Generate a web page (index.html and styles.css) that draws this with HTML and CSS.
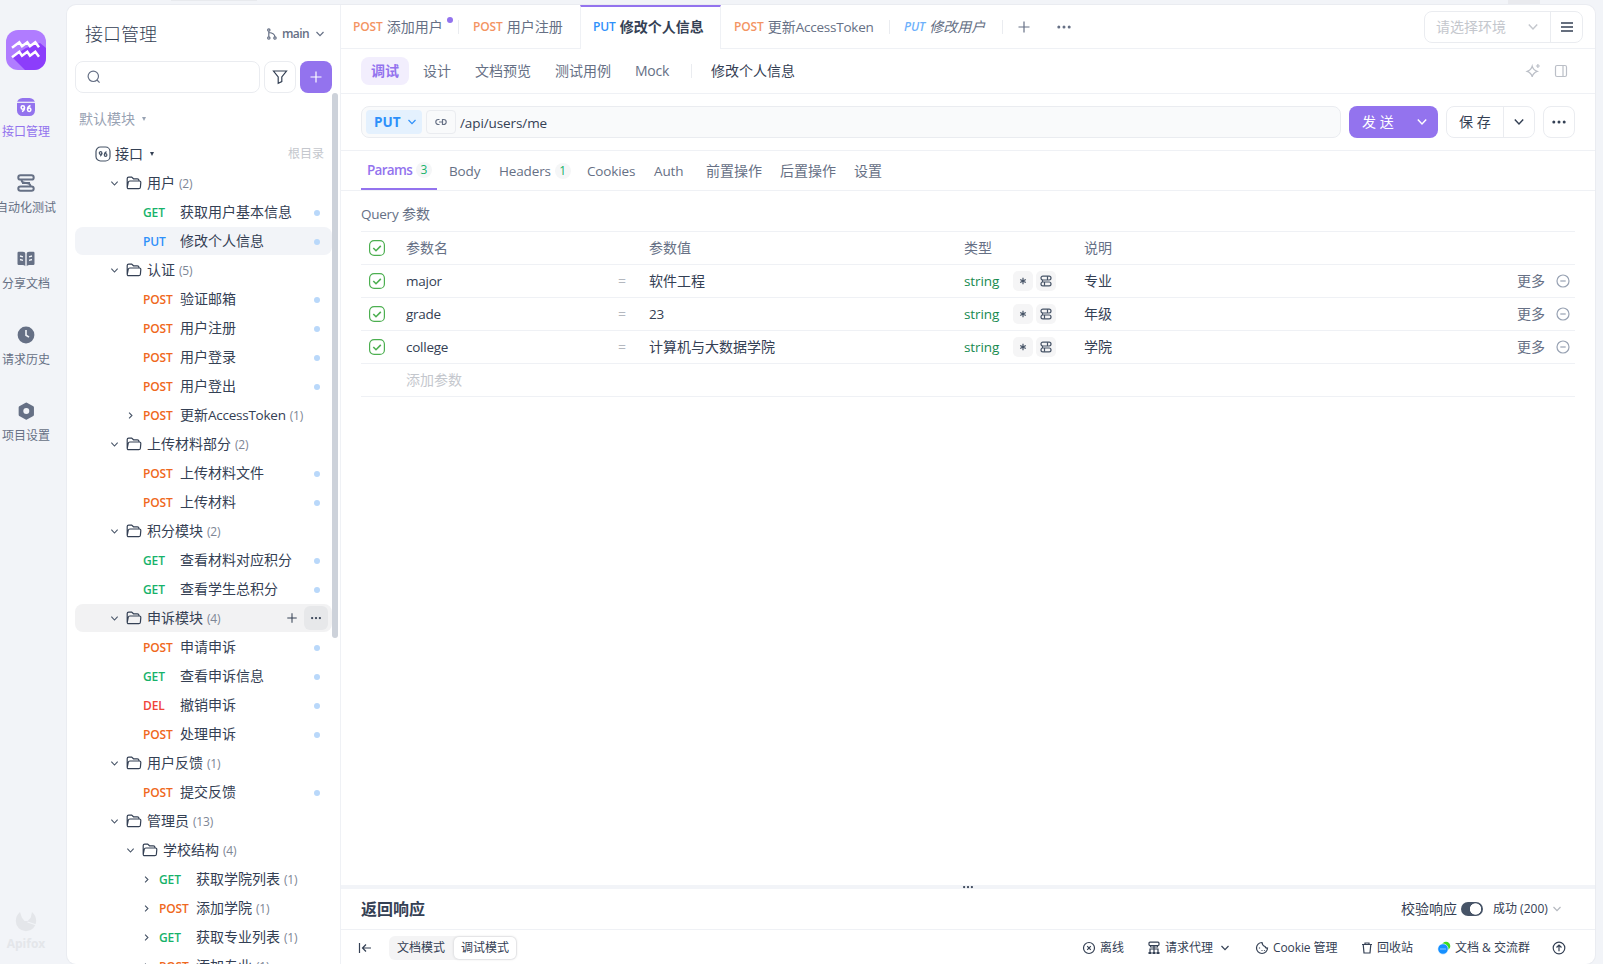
FILE: index.html
```html
<!DOCTYPE html>
<html lang="zh-CN">
<head>
  <meta charset="UTF-8">
  <title>接口管理</title>
  <link rel="stylesheet" href="styles.css">
</head>
<body>

  <!-- ICONS -->
  <svg class="sprite" width="0" height="0">
    <symbol id="down" viewBox="0 0 10 10"><path d="M1.500 3l3.500 3.700L8.500 3"/></symbol>
    <symbol id="right" viewBox="0 0 10 10"><path d="M3.400 1.800l3.200 3.200-3.200 3.200"/></symbol>
    <symbol id="folder" viewBox="0 0 16 16"><path d="M1.200 12.500V3.600q0-1.500 1.500-1.500h3l1.800 1.700h3.800q1.500 0 1.800 1.700M3.900 6h9.300q1.700 0 1.600 1.600l-.4 4.600q-.1 1.500-1.700 1.500H2.700q-1.600 0-1.400-1.600l.9-4.600Q2.500 6 3.900 6z"/></symbol>
    <symbol id="check" viewBox="0 0 16 16"><rect x=".6" y=".6" width="14.800" height="14.800" rx="4.500"/><path d="M4.300 8l2.700 2.700 4.800-4.800" stroke-width="1.600"/></symbol>
    <symbol id="minus" viewBox="0 0 14 14"><circle cx="7" cy="7" r="6"/><path d="M4.300 7h5.400"/></symbol>
    <symbol id="dots" viewBox="0 0 16 16"><g fill="currentColor" stroke="none"><circle cx="2.800" cy="8" r="1.500"/><circle cx="8" cy="8" r="1.500"/><circle cx="13.200" cy="8" r="1.500"/></g></symbol>
    <symbol id="plus" viewBox="0 0 14 14"><path d="M7 1.500v11M1.500 7h11"/></symbol>
    <symbol id="star" viewBox="0 0 8 8"><path d="M4 .8v6.400M1.200 2.400l5.600 3.200M6.800 2.400L1.200 5.600"/></symbol>
    <symbol id="schema" viewBox="0 0 12 12"><rect x="1" y="1.200" width="10" height="3.800" rx="1.900"/><rect x="1" y="7" width="10" height="3.800" rx="1.900"/><path d="M7.500 1.200v3.800M4.500 7v3.800M2.500 5v2"/></symbol>
  </svg>

  <div class="topbar"><i class="top-left"></i><i class="top-right"></i></div>

  <div class="shell">

    <!-- LEFT RAIL -->
    <nav class="rail">
      <svg class="logo" width="40" height="40" viewBox="0 0 40 40">
        <defs><clipPath id="round"><rect width="40" height="40" rx="12"/></clipPath></defs>
        <g clip-path="url(#round)">
          <rect width="40" height="40" fill="#b07cff"/>
          <path d="M6 27l13 13h21V18l-6-5-14 5z" fill="#8c3dfb"/>
        </g>
        <path d="M6 17.800l7.300-5.600 2.700 4 5.300-4 2.700 4 5.300-4 3.700 5M6 27.300l7.300-5.600 2.700 4 5.300-4 2.700 4 5.300-4 3.700 5" fill="none" stroke="#fff" stroke-width="2.500"/>
      </svg>
      <a class="rail-item active">
        <svg width="20" height="20" viewBox="0 0 20 20"><rect x="1" y="1" width="18" height="18" rx="5.500" fill="#9373ee"/><path d="M1 5.300h18" stroke="#f2f4f8" stroke-width="1.200"/><g fill="none" stroke="#fff" stroke-width="1.500"><circle cx="6.800" cy="10.500" r="1.700"/><path d="M8.500 10.500q0 3-2.500 4M14.500 8.500Q11.500 9.500 11.500 12.600"/><circle cx="13.200" cy="12.800" r="1.700"/></g></svg>
        <span>接口管理</span>
      </a>
      <a class="rail-item wide">
        <svg width="20" height="20" viewBox="0 0 20 20" fill="none" stroke="#667085" stroke-width="2"><rect x="2.300" y="2.200" width="15.400" height="4.400" rx="2.200"/><rect x="2.300" y="13.400" width="15.400" height="4.400" rx="2.200"/><path d="M5.500 7q.5 3 4.500 3t4.500 3M6 10h8"/></svg>
        <span>自动化测试</span>
      </a>
      <a class="rail-item">
        <svg width="20" height="20" viewBox="0 0 20 20"><path d="M1.500 4q0-1.200 1.200-1.200H7q2.300 0 2.300 1.700v12.700Q8.500 16 6.500 16H2.700q-1.200 0-1.200-1.200zM18.500 4q0-1.200-1.200-1.200H13q-2.300 0-2.300 1.700v12.700q.8-1.200 2.800-1.200h3.800q1.200 0 1.200-1.200z" fill="#667085"/><path d="M4 7l3 .8M4 10.500l3 .8M16 7l-3 .8M16 10.500l-3 .8" stroke="#f2f4f8" stroke-width="1.300"/></svg>
        <span>分享文档</span>
      </a>
      <a class="rail-item">
        <svg width="20" height="20" viewBox="0 0 20 20"><circle cx="10" cy="10" r="8.400" fill="#667085"/><path d="M10 5v5.200l3 2" fill="none" stroke="#f2f4f8" stroke-width="1.600"/></svg>
        <span>请求历史</span>
      </a>
      <a class="rail-item">
        <svg width="20" height="20" viewBox="0 0 20 20"><path d="M10.300 2.800l6.400 3.600v7.400l-6.400 3.600-6.400-3.600V6.400z" fill="#667085" stroke="#667085" stroke-width="2.500" stroke-linejoin="round"/><circle cx="10.300" cy="10" r="3" fill="#f2f4f8"/></svg>
        <span>项目设置</span>
      </a>
      <div class="brand">
        <svg width="22" height="22" viewBox="0 0 22 22"><path d="M5 2l1.800 5.500L9.500 11h3.200l3-3.300L17 2q4.200 3.500 4.200 9A10.200 10.200 0 01.800 11Q.8 5.500 5 2z" fill="#e4e6ea"/><path d="M12.500 12l9 3" stroke="#f2f4f8"/></svg>
        <b>Apifox</b>
      </div>
    </nav>

    <div class="panel">

      <!-- API TREE -->
      <aside class="sidebar">
        <div class="side-head">
          <h1>接口管理</h1>
          <div class="branch">
            <svg width="10" height="12" viewBox="0 0 10 12"><circle cx="1.800" cy="2" r="1.200"/><circle cx="1.800" cy="10" r="1.200"/><circle cx="8" cy="10" r="1.200"/><path d="M1.800 3.200v5.600M2 4.500q5.500.500 6 4.300"/></svg>
            <b>main</b>
            <svg width="10" height="10"><use href="#down"/></svg>
          </div>
        </div>
        <div class="side-tools">
          <div class="search"><svg width="14" height="14" viewBox="0 0 14 14"><circle cx="6.300" cy="6.300" r="5.200"/><path d="M10 10l2.600 2.600"/></svg></div>
          <button class="tool"><svg width="16" height="16" viewBox="0 0 16 16"><path d="M1.500 2h13l-4.700 6v4.500l-3.600 1.700V8z"/></svg></button>
          <button class="tool primary"><svg width="14" height="14"><use href="#plus"/></svg></button>
        </div>
        <div class="module">默认模块<i class="caret"></i></div>
        <div class="scrollbar"></div>

        <div class="tree">
          <div class="root">
            <svg width="16" height="16" viewBox="0 0 16 16"><rect x="1" y="1" width="14" height="14" rx="4.500"/><circle cx="5.600" cy="7" r="1.300"/><path d="M6.900 7q0 2.200-1.700 3.200M11.500 5.600Q9.400 6.600 9.300 8.700"/><circle cx="10.600" cy="9" r="1.300"/></svg>
            <span>接口</span><i class="caret"></i>
            <em>根目录</em>
          </div>

          <div class="row folder"><svg class="arrow"><use href="#down"/></svg><svg class="dir"><use href="#folder"/></svg>用户<small>(2)</small></div>
          <div class="row api"><b class="get">GET</b>获取用户基本信息<i class="dot"></i></div>
          <div class="row api selected"><b class="put">PUT</b>修改个人信息<i class="dot"></i></div>

          <div class="row folder"><svg class="arrow"><use href="#down"/></svg><svg class="dir"><use href="#folder"/></svg>认证<small>(5)</small></div>
          <div class="row api"><b class="post">POST</b>验证邮箱<i class="dot"></i></div>
          <div class="row api"><b class="post">POST</b>用户注册<i class="dot"></i></div>
          <div class="row api"><b class="post">POST</b>用户登录<i class="dot"></i></div>
          <div class="row api"><b class="post">POST</b>用户登出<i class="dot"></i></div>
          <div class="row api open"><svg class="arrow"><use href="#right"/></svg><b class="post">POST</b>更新<span class="en">AccessToken</span><small>(1)</small></div>

          <div class="row folder"><svg class="arrow"><use href="#down"/></svg><svg class="dir"><use href="#folder"/></svg>上传材料部分<small>(2)</small></div>
          <div class="row api"><b class="post">POST</b>上传材料文件<i class="dot"></i></div>
          <div class="row api"><b class="post">POST</b>上传材料<i class="dot"></i></div>

          <div class="row folder"><svg class="arrow"><use href="#down"/></svg><svg class="dir"><use href="#folder"/></svg>积分模块<small>(2)</small></div>
          <div class="row api"><b class="get">GET</b>查看材料对应积分<i class="dot"></i></div>
          <div class="row api"><b class="get">GET</b>查看学生总积分<i class="dot"></i></div>

          <div class="row folder hover"><svg class="arrow"><use href="#down"/></svg><svg class="dir"><use href="#folder"/></svg>申诉模块<small>(4)</small>
            <div class="row-tools"><svg width="12" height="12"><use href="#plus"/></svg><span><svg width="12" height="12"><use href="#dots"/></svg></span></div>
          </div>
          <div class="row api"><b class="post">POST</b>申请申诉<i class="dot"></i></div>
          <div class="row api"><b class="get">GET</b>查看申诉信息<i class="dot"></i></div>
          <div class="row api"><b class="del">DEL</b>撤销申诉<i class="dot"></i></div>
          <div class="row api"><b class="post">POST</b>处理申诉<i class="dot"></i></div>

          <div class="row folder"><svg class="arrow"><use href="#down"/></svg><svg class="dir"><use href="#folder"/></svg>用户反馈<small>(1)</small></div>
          <div class="row api"><b class="post">POST</b>提交反馈<i class="dot"></i></div>

          <div class="row folder"><svg class="arrow"><use href="#down"/></svg><svg class="dir"><use href="#folder"/></svg>管理员<small>(13)</small></div>
          <div class="row folder level2"><svg class="arrow"><use href="#down"/></svg><svg class="dir"><use href="#folder"/></svg>学校结构<small>(4)</small></div>
          <div class="row api open level3"><svg class="arrow"><use href="#right"/></svg><b class="get">GET</b>获取学院列表<small>(1)</small></div>
          <div class="row api open level3"><svg class="arrow"><use href="#right"/></svg><b class="post">POST</b>添加学院<small>(1)</small></div>
          <div class="row api open level3"><svg class="arrow"><use href="#right"/></svg><b class="get">GET</b>获取专业列表<small>(1)</small></div>
          <div class="row api open level3"><svg class="arrow"><use href="#right"/></svg><b class="post">POST</b>添加专业<small>(1)</small></div>
        </div>
      </aside>

      <!-- WORK AREA -->
      <main class="main">
        <div class="tabs">
          <div class="tab t1"><b class="post">POST</b>添加用户<i class="unsaved"></i></div>
          <div class="tab t2"><b class="post">POST</b>用户注册</div>
          <div class="tab t3 current"><b class="put">PUT</b><strong>修改个人信息</strong></div>
          <div class="tab t4"><b class="post">POST</b>更新<span class="en">AccessToken</span></div>
          <div class="tab t5"><b class="put">PUT</b>修改用户</div>
          <div class="tab-rest">
            <svg width="14" height="14"><use href="#plus"/></svg>
            <svg width="16" height="16"><use href="#dots"/></svg>
            <div class="env">
              <span>请选择环境</span>
              <svg width="12" height="12"><use href="#down"/></svg>
              <button><svg width="14" height="14" viewBox="0 0 14 14"><path d="M1 3h12M1 7h12M1 11h12" stroke-width="1.700"/></svg></button>
            </div>
          </div>
        </div>

        <div class="modes">
          <a class="on">调试</a><a>设计</a><a>文档预览</a><a>测试用例</a><a class="en">Mock</a>
          <span class="mode-title">修改个人信息</span>
          <svg width="16" height="16" viewBox="0 0 16 16"><path d="M7.200 3.200q1 3.800 5 5.200-4 1.400-5 5.400-1-4-5-5.400 4-1.400 5-5.200zM12.900 1v4M10.900 3h4"/></svg>
          <svg width="14" height="14" viewBox="0 0 14 14"><rect x="1.500" y="1.500" width="11" height="11" rx="1.500"/><path d="M9 1.500v11"/></svg>
        </div>

        <div class="request">
          <div class="url">
            <div class="method">PUT <svg width="10" height="10"><use href="#down"/></svg></div>
            <div class="link"><svg width="12" height="8" viewBox="0 0 12 8"><path d="M4.500 1.500H3.300a2.500 2.500 0 000 5h1.200M4 4h4M7.500 1.500h1.200a2.500 2.500 0 010 5H7.500z"/></svg></div>
            <span>/api/users/me</span>
          </div>
          <div class="send"><span>发 送</span><svg width="12" height="12"><use href="#down"/></svg></div>
          <div class="save"><span>保 存</span><i><svg width="12" height="12"><use href="#down"/></svg></i></div>
          <div class="more"><svg width="16" height="16"><use href="#dots"/></svg></div>
        </div>

        <div class="params-tabs">
          <a class="p1 on"><span>Params</span><sup>3</sup></a>
          <a class="p2"><span>Body</span></a>
          <a class="p3"><span>Headers</span><sup>1</sup></a>
          <a class="p4"><span>Cookies</span></a>
          <a class="p5"><span>Auth</span></a>
          <a>前置操作</a>
          <a>后置操作</a>
          <a>设置</a>
        </div>

        <section class="query">
          <h2><span class="en">Query</span> 参数</h2>
          <div class="grid head">
            <svg><use href="#check"/></svg><span>参数名</span><i></i><span>参数值</span><span>类型</span><span>说明</span>
          </div>
          <div class="grid">
            <svg><use href="#check"/></svg><span class="en">major</span><i>=</i><span>软件工程</span>
            <div class="type">string<u><svg width="8" height="8"><use href="#star"/></svg></u><u><svg width="12" height="12"><use href="#schema"/></svg></u></div>
            <span>专业</span><div class="ops">更多<svg width="14" height="14"><use href="#minus"/></svg></div>
          </div>
          <div class="grid">
            <svg><use href="#check"/></svg><span class="en">grade</span><i>=</i><span class="en">23</span>
            <div class="type">string<u><svg width="8" height="8"><use href="#star"/></svg></u><u><svg width="12" height="12"><use href="#schema"/></svg></u></div>
            <span>年级</span><div class="ops">更多<svg width="14" height="14"><use href="#minus"/></svg></div>
          </div>
          <div class="grid">
            <svg><use href="#check"/></svg><span class="en">college</span><i>=</i><span>计算机与大数据学院</span>
            <div class="type">string<u><svg width="8" height="8"><use href="#star"/></svg></u><u><svg width="12" height="12"><use href="#schema"/></svg></u></div>
            <span>学院</span><div class="ops">更多<svg width="14" height="14"><use href="#minus"/></svg></div>
          </div>
          <div class="grid add"><i></i><span>添加参数</span></div>
        </section>

        <!-- RESPONSE -->
        <div class="splitter"><svg width="12" height="12"><use href="#dots"/></svg></div>
        <div class="response">
          <h3>返回响应</h3>
          <span class="verify">校验响应</span>
          <i class="toggle"></i>
          <span class="success">成功 (200)</span>
          <svg width="10" height="10"><use href="#down"/></svg>
        </div>

        <footer class="footer">
          <svg class="collapse" width="14" height="12" viewBox="0 0 14 12"><path d="M1.500 1v10M13 6H4.500M8 2.500L4.500 6 8 9.500"/></svg>
          <div class="segment"><span>文档模式</span><span class="on">调试模式</span></div>
          <div class="foot f1"><svg width="14" height="14" viewBox="0 0 14 14"><circle cx="7" cy="7" r="5.500"/><path d="M5.200 5.200l3.600 3.600M8.800 5.200L5.200 8.800"/></svg>离线</div>
          <div class="foot f2"><svg width="14" height="14" viewBox="0 0 14 14"><rect x="2" y="1.200" width="10" height="3.300" rx="1"/><path d="M7 4.500v7M3 11V8h8v3M3.500 4.500V6h7V4.500"/><path d="M1.500 12h3M5.500 12h3M9.500 12h3" stroke-width="2"/></svg>请求代理<svg width="10" height="10"><use href="#down"/></svg></div>
          <div class="foot f3"><svg width="14" height="14" viewBox="0 0 14 14"><path d="M7 1.500A5.500 5.500 0 1012.500 7q-2 .5-2.500-1.500Q7.500 5 7 1.500z"/><path d="M4.500 6.500v1M6.500 9.500h1M9.500 9v.8"/></svg>Cookie 管理</div>
          <div class="foot f4"><svg width="12" height="12" viewBox="0 0 12 12"><path d="M1 2.500h10M4 2.500V1h4v1.500M2.200 2.500L3 11h6l.8-8.500"/></svg>回收站</div>
          <div class="foot f5"><svg width="14" height="14" viewBox="0 0 14 14"><circle cx="9" cy="5" r="4.300" fill="#3fdc1c" stroke="none"/><circle cx="6" cy="8" r="5.200" fill="#1690ff" stroke="#fff" stroke-width=".6"/><path d="M3.500 8h1M5.500 8h1M7.500 8h1" stroke="#fff"/></svg>文档 &amp; 交流群</div>
          <div class="foot f6"><svg width="14" height="14" viewBox="0 0 14 14"><circle cx="7" cy="7" r="5.800"/><path d="M7 10.300V4M4.500 6.500L7 4l2.500 2.500"/></svg></div>
        </footer>
      </main>
    </div>
  </div>

</body>
</html>
```

FILE: styles.css
```css
* {
  box-sizing: border-box;
}

body {
  margin: 0;
  height: 100vh;
  overflow: hidden;
  background: #f2f4f8;
  color: #344054;
  font-family: "Open Sans", "Noto Sans CJK SC", sans-serif;
  font-size: 14px;
  line-height: 20px;
  white-space: nowrap;
}

svg {
  flex: none;
  fill: none;
  stroke: currentColor;
  stroke-width: 1.2;
}

.sprite {
  position: absolute;
}

i, em {
  font-style: normal;
}

.en {
  font-size: 13.5px;
  letter-spacing: -0.25px;
}

.get { color: #17b26a; }
.put { color: #2e90fa; }
.post { color: #ef6820; }
.del { color: #f04438; }

/* TOP EDGE */
.topbar {
  height: 5px;
  display: flex;
}

.top-left {
  width: 86px;
  height: 1px;
  margin-left: 171px;
  background: #e8eaee;
}

.top-right {
  width: 32px;
  height: 4px;
  margin-left: 1251px;
  background: #e9eaee;
}

.shell {
  display: flex;
  height: calc(100vh - 5px);
}

/* LEFT RAIL */
.rail {
  width: 52px;
  margin-right: 15px;
  display: flex;
  flex-direction: column;
  align-items: center;
  padding-top: 25px;
}

.logo {
  stroke: none;
  margin-bottom: 27px;
}

.rail-item {
  height: 76px;
  display: flex;
  flex-direction: column;
  align-items: center;
  font-size: 12px;
  gap: 5px;
  color: #667085;
}

.rail-item svg {
  stroke-width: 0;
}

.rail-item svg[fill="none"] {
  stroke: #667085;
  stroke-width: 2;
}

.rail-item.active {
  color: #9373ee;
}

.brand {
  margin-top: auto;
  margin-bottom: 10px;
  display: flex;
  flex-direction: column;
  align-items: center;
  gap: 2px;
  color: #e4e6ea;
  font-size: 12px;
}

.brand svg {
  stroke: none;
}

.panel {
  width: 1528px;
  display: flex;
  background: #fff;
  border-radius: 9px;
  overflow: hidden;
  box-shadow: 0 0 0 1px #eaecf1;
}

/* SIDEBAR */
.sidebar {
  position: relative;
  width: 274px;
  flex: none;
  padding-left: 8px;
  border-right: 1px solid #eff1f5;
  overflow: hidden;
}

.side-head {
  height: 56px;
  padding: 0 15px 0 10px;
  display: flex;
  align-items: center;
  justify-content: space-between;
}

.side-head h1 {
  margin: 0;
  padding-top: 1px;
  font-size: 18px;
  font-weight: 300;
}

.branch {
  display: flex;
  align-items: center;
  color: #667085;
  font-size: 12px;
  padding-top: 1px;
}

.branch b {
  font-weight: 600;
  margin: 0 6px 0 5px;
  letter-spacing: -0.6px;
}

.side-tools {
  display: flex;
  gap: 4px;
}

.search {
  width: 185px;
  height: 32px;
  display: flex;
  align-items: center;
  padding-left: 11px;
  border: 1px solid #eaecf0;
  border-radius: 8px;
  color: #667085;
}

.tool {
  width: 32px;
  height: 32px;
  display: flex;
  align-items: center;
  justify-content: center;
  padding: 0;
  border: 1px solid #eaecf0;
  border-radius: 8px;
  background: #fff;
  color: #344054;
}

.tool.primary {
  border: 0;
  background: #9373ee;
  color: #fff;
}

.module {
  margin: 16px 0 11px 4px;
  display: flex;
  align-items: center;
  color: #98a2b3;
}

.caret {
  margin-left: 7px;
  border: 2.5px solid transparent;
  border-top: 4px solid currentColor;
  border-bottom: 0;
}

/* overlays the right edge of the tree */
.scrollbar {
  position: absolute;
  left: 265px;
  top: 88px;
  width: 6px;
  height: 545px;
  border-radius: 3px;
  background: #cdd2da;
}

.tree {
  width: 257px;
}

.root {
  height: 28px;
  margin-bottom: 1px;
  padding: 0 8px 0 20px;
  display: flex;
  align-items: center;
}

.root svg {
  color: #475467;
}

.root span {
  margin-left: 4px;
}

.root em {
  margin-left: auto;
  font-size: 12px;
  color: #c4c7cd;
}

.row {
  height: 28px;
  margin-bottom: 1px;
  padding-right: 12px;
  display: flex;
  align-items: center;
  border-radius: 8px;
}

.row.selected {
  background: #f2f4f8;
}

.row.hover {
  background: #f2f2f3;
}

.row small {
  margin-left: 4px;
  padding-top: 1px;
  font-size: 12px;
  letter-spacing: -0.2px;
  color: #7d8695;
}

.row b {
  width: 37px;
  padding-top: 1px;
  font-size: 12px;
  font-weight: 600;
  letter-spacing: -0.1px;
}

.arrow {
  width: 9px;
  height: 9px;
  color: #475467;
}

.dir {
  width: 16px;
  height: 16px;
  margin: 0 5px 0 7px;
}

.folder {
  padding-left: 35px;
}

.level2 {
  padding-left: 51px;
}

.api {
  padding-left: 68px;
}

.api.open {
  padding-left: 51px;
}

.api.level3 {
  padding-left: 67px;
}

.open .arrow {
  margin-right: 8px;
}

.dot {
  width: 6px;
  height: 6px;
  margin: 2px 0 0 auto;
  border-radius: 50%;
  background: #b9d8fa;
}

.row-tools {
  display: flex;
  align-items: center;
  gap: 6px;
  margin: 0 -8px 0 auto;
}

.row-tools span {
  width: 24px;
  height: 24px;
  display: flex;
  align-items: center;
  justify-content: center;
  border-radius: 6px;
  background: #e7e8ea;
}

/* TABS */
.main {
  flex: 1;
  display: flex;
  flex-direction: column;
  min-width: 0;
}

.tabs {
  height: 44px;
  display: flex;
  color: #667085;
}

.tab {
  position: relative;
  display: flex;
  align-items: center;
  padding: 0 0 0 13px;
  border-bottom: 1px solid #eff1f5;
}

.tab b {
  font-size: 12px;
  font-weight: 600;
  letter-spacing: -0.1px;
  margin-right: 4px;
}

.tab .post,
.t5 .put {
  opacity: 0.7;
}

.t1 { width: 118px; padding-left: 12px; }
.t2 { width: 121px; padding-left: 14px; }
.t3 { width: 141px; padding-left: 12px; }
.t4 { width: 169px; padding-left: 13px; }
.t5 { width: 113px; padding-left: 14px; font-style: italic; }

.t1::after,
.t4::after,
.t5::after {
  content: "";
  position: absolute;
  right: 0;
  top: 15px;
  width: 1px;
  height: 14px;
  background: #eaecf0;
}

.unsaved {
  position: absolute;
  left: 106px;
  top: 12px;
  width: 6px;
  height: 6px;
  border-radius: 50%;
  background: #9373ee;
}

.tab.current {
  border: 1px solid #eff1f5;
  border-top: 2px solid #9373ee;
  border-bottom: 0;
}

.tab.current b,
.tab strong {
  margin-top: -2px;
}

.tab strong {
  color: #344054;
  font-weight: 600;
}

.tab-rest {
  flex: 1;
  display: flex;
  align-items: center;
  padding: 0 12px 0 14px;
  border-bottom: 1px solid #eff1f5;
}

.tab-rest > svg + svg {
  margin-left: 25px;
}

.env {
  width: 159px;
  height: 32px;
  margin-left: auto;
  display: flex;
  align-items: center;
  padding-left: 11px;
  border: 1px solid #eaecf0;
  border-radius: 8px;
  color: #c4c7cd;
}

.env > svg {
  margin-left: 21px;
}

.env button {
  width: 32px;
  height: 30px;
  margin-left: auto;
  padding: 0;
  border: 0;
  border-left: 1px solid #eaecf0;
  background: none;
  color: #344054;
  display: flex;
  align-items: center;
  justify-content: center;
}

.modes {
  height: 45px;
  display: flex;
  align-items: center;
  gap: 4px;
  padding: 0 27px 0 20px;
  border-bottom: 1px solid #eff1f5;
  color: #667085;
}

.modes a {
  padding: 4px 10px;
  border-radius: 8px;
  font-size: 14px;
}

.modes .on {
  background: #f2eefd;
  color: #9373ee;
  font-weight: 600;
}

.mode-title {
  margin: 0 auto 0 8px;
  padding-left: 20px;
  color: #344054;
  background: linear-gradient(#eaecf0, #eaecf0) 0 50% / 1px 14px no-repeat;
}

.modes svg {
  color: #bbbfc7;
}

.modes svg + svg {
  margin-left: 9px;
}

/* URL BAR */
.request {
  height: 57px;
  display: flex;
  align-items: center;
  padding: 0 20px;
  gap: 8px;
  border-bottom: 1px solid #eff1f5;
}

.url {
  flex: 1;
  height: 32px;
  display: flex;
  align-items: center;
  gap: 4px;
  padding-left: 4px;
  border: 1px solid #eaecf0;
  border-radius: 8px;
  background: #f9fafb;
  font-size: 14px;
}

.method {
  width: 56px;
  height: 24px;
  padding-left: 8px;
  display: flex;
  align-items: center;
  gap: 6px;
  border-radius: 4px;
  background: #e4f1fe;
  color: #2e90fa;
  font-size: 13.5px;
  font-weight: 700;
}

.link {
  width: 30px;
  height: 24px;
  display: flex;
  align-items: center;
  justify-content: center;
  border: 1px solid #eaecf0;
  border-radius: 4px;
  color: #667085;
}

.url span {
  padding-top: 2px;
  font-size: 13.5px;
  letter-spacing: -0.1px;
}

.send,
.save,
.more {
  height: 32px;
  display: flex;
  align-items: center;
  border: 1px solid #eaecf0;
  border-radius: 8px;
}

.send {
  width: 89px;
  padding: 0 10px 0 13px;
  justify-content: space-between;
  border: 0;
  background: #9373ee;
  color: #fff;
}

.save {
  width: 89px;
  padding-left: 12px;
  justify-content: space-between;
}

.save i {
  width: 31px;
  height: 30px;
  display: flex;
  align-items: center;
  justify-content: center;
  border-left: 1px solid #eaecf0;
}

.more {
  width: 32px;
  justify-content: center;
}

/* PARAMS */
.params-tabs {
  height: 40px;
  display: flex;
  padding-left: 20px;
  border-bottom: 1px solid #eff1f5;
  color: #667085;
}

.params-tabs a {
  display: flex;
  align-items: center;
  margin-right: 18px;
}

.params-tabs span {
  font-size: 13.5px;
  letter-spacing: -0.15px;
}

.params-tabs .p1 {
  width: 76px;
  padding-left: 6px;
  margin-right: 12px;
}

.params-tabs .p1 span {
  letter-spacing: -0.7px;
}

.params-tabs .p2 { width: 50px; margin: 0; }
.params-tabs .p3 { width: 88px; margin: 0; }
.params-tabs .p4 { width: 67px; margin: 0; }
.params-tabs .p5 { width: 52px; margin: 0; }

.params-tabs .on {
  border-bottom: 2px solid #9373ee;
  color: #9373ee;
  font-weight: 600;
}

.params-tabs sup {
  width: 16px;
  height: 16px;
  margin-left: 4px;
  border-radius: 50%;
  background: #f5f6f7;
  color: #17b26a;
  font-size: 12px;
  line-height: 16px;
  font-weight: 500;
  text-align: center;
}

.query {
  flex: 1;
  padding: 13px 20px 0;
}

.query h2 {
  margin: 0 0 7px;
  font-size: 14px;
  font-weight: 400;
  color: #667085;
}

.grid {
  height: 33px;
  display: grid;
  grid-template-columns: 37px 212px 31px 315px 120px 1fr auto;
  align-items: center;
  padding-left: 8px;
  border-bottom: 1px solid #eff1f5;
}

.grid.head {
  height: 34px;
  border-top: 1px solid #eff1f5;
  color: #667085;
}

.grid > svg {
  width: 16px;
  height: 16px;
  color: #4caf50;
}

.grid > i {
  color: #b4b8bf;
}

.grid.add {
  color: #c4c7cd;
}

.type {
  display: flex;
  align-items: center;
  color: #178a4f;
  font-size: 13.5px;
  letter-spacing: -0.1px;
}

.type u {
  width: 20px;
  height: 20px;
  display: flex;
  align-items: center;
  justify-content: center;
  margin-left: 3px;
  border-radius: 5px;
  background: #f5f5f6;
  color: #475467;
}

.type u:first-of-type {
  margin-left: auto;
}

.type u:last-of-type {
  margin-right: 28px;
}

.ops {
  display: flex;
  align-items: center;
  gap: 11px;
  padding-right: 5px;
  color: #667085;
}

.ops svg {
  color: #98a2b3;
}

/* RESPONSE */
.splitter {
  height: 4px;
  display: flex;
  align-items: center;
  justify-content: center;
  background: #f2f4f8;
}

.response {
  height: 41px;
  display: flex;
  align-items: center;
  padding: 0 33px 0 20px;
  border-bottom: 1px solid #eff1f5;
}

.response h3 {
  margin: 0 auto 0 0;
  font-size: 16px;
  font-weight: 600;
}

.toggle {
  width: 22px;
  height: 14px;
  margin: 0 10px 0 4px;
  border-radius: 7px;
  background: radial-gradient(circle at 14.500px 7px, #fff 5.300px, #475467 6px);
}

.success {
  width: 59px;
  font-size: 12px;
}

.response svg {
  color: #b4b8bf;
}

.footer {
  height: 34px;
  display: flex;
  align-items: center;
  padding: 1px 0 0 17px;
  font-size: 12px;
}

.segment {
  display: flex;
  margin: 0 auto 0 17px;
  border-radius: 6px;
  background: #f4f4f5;
}

.segment span {
  height: 24px;
  padding: 0 8px;
  line-height: 24px;
}

.segment .on {
  height: 22px;
  margin: 1px;
  padding: 0 7px;
  line-height: 22px;
  border-radius: 5px;
  background: #fff;
  box-shadow: 0 0 3px rgba(16, 24, 40, 0.18);
}

.foot {
  display: flex;
  align-items: center;
  gap: 4px;
}

.foot svg + svg {
  margin-left: 3px;
}

.f1 { width: 65px; }
.f2 { width: 108px; }
.f3 { width: 106px; letter-spacing: -0.1px; }
.f4 { width: 76px; }
.f5 { width: 115px; }
.f6 { width: 43px; }
```
